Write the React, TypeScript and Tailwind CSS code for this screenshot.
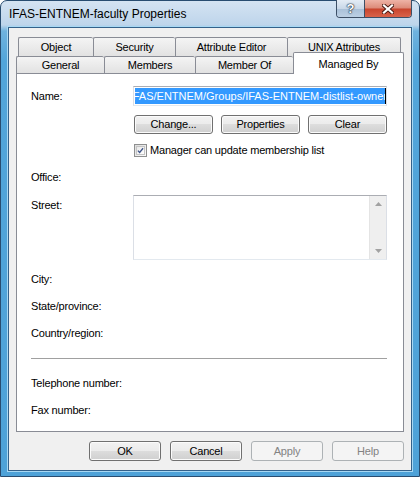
import React from "react";

const tabBase =
  "flex items-center justify-center border-t border-l border-[#898c95] rounded-t-[2px] bg-linear-to-b from-[#f4f4f4] to-[#e2e2e2] text-[11px] tracking-[-0.2px] text-black";

const pushBtn =
  "flex items-center justify-center rounded-[3px] border border-[#707070] bg-[linear-gradient(to_bottom,#f2f2f2_0%,#ebebeb_50%,#dddddd_50%,#cfcfcf_100%)] shadow-[inset_0_0_0_1px_#fbfbfb] text-[11px] tracking-[-0.2px] text-black";

const label = "h-[13px] leading-[13px] text-[11px] tracking-[-0.2px] text-black whitespace-nowrap";

function CloseGlyph() {
  return (
    <svg width="12" height="10" viewBox="0 0 12 10">
      <path d="M2 1.5 L10 8.5 M10 1.5 L2 8.5" stroke="#4a1a12" strokeWidth="4" strokeLinecap="square" />
      <path d="M2 1.5 L10 8.5 M10 1.5 L2 8.5" stroke="#ffffff" strokeWidth="2.2" strokeLinecap="square" />
    </svg>
  );
}

function CheckMark() {
  return (
    <svg width="9" height="9" viewBox="0 0 9 9">
      <path d="M1.2 4.6 L3.4 7 L7.8 1.6" fill="none" stroke="#3e5488" strokeWidth="1.7" />
    </svg>
  );
}

function Arrow({ up }: { up?: boolean }) {
  return (
    <svg width="7" height="4" viewBox="0 0 7 4">
      {up ? <path d="M0 4 L3.5 0 L7 4 Z" fill="#a2a2a2" /> : <path d="M0 0 L3.5 4 L7 0 Z" fill="#a2a2a2" />}
    </svg>
  );
}

export default function App() {
  return (
    <div className="w-[420px] h-[477px] overflow-hidden bg-white font-['Liberation_Sans',Arial,sans-serif]">
      <div className="w-[420px] h-[477px] flex flex-col border border-[#284c70] rounded-t-[7px] bg-[linear-gradient(to_bottom,#d4e3f2_0px,#bed5eb_24px,#6fb2de_30px,#52a5da_60px,#4ea2d8_100%)] px-[7px] pb-[5px]">
        {/* caption */}
        <div className="h-[26px] flex items-start justify-between">
          <span className="mt-[6px] ml-px text-[12px] leading-[14px] text-black whitespace-nowrap">
            IFAS-ENTNEM-faculty Properties
          </span>
          <div className="-mt-px flex h-[18px] rounded-b-[4px] border border-t-0 border-[#3c4f66] overflow-hidden">
            <div className="w-[28px] h-full flex items-center justify-center bg-[linear-gradient(to_bottom,#e4ecf5_0%,#c9d8e8_50%,#a9c0d8_52%,#bcd0e4_100%)] border-r border-[#3c4f66]">
              <span className="text-[13px] leading-[13px] font-bold text-white [text-shadow:0_0_1px_#1d2c3c,0_0_1px_#1d2c3c,0_0_2px_#1d2c3c]">
                ?
              </span>
            </div>
            <div className="w-[46px] h-full flex items-center justify-center bg-[linear-gradient(to_bottom,#eeb3a6_0%,#dc8a78_48%,#c8442d_52%,#d9634a_100%)]">
              <CloseGlyph />
            </div>
          </div>
        </div>

        {/* client area */}
        <div className="flex-1 flex flex-col border border-[#34618a] shadow-[0_0_0_1px_#a8d8f3] bg-[#f0f0f0] pt-[9px] px-[7px] pb-[9px]">
          {/* tab headers */}
          <div className="h-[36px] flex flex-col">
            <div className="h-[19px] flex pl-[2px]">
              <div className={`${tabBase} w-[75px]`}>Object</div>
              <div className={`${tabBase} w-[82px]`}>Security</div>
              <div className={`${tabBase} w-[112px]`}>Attribute Editor</div>
              <div className={`${tabBase} w-[114px] border-r`}>UNIX Attributes</div>
            </div>
            <div className="h-[17px] flex items-end">
              <div className={`${tabBase} h-[17px] w-[88px] rounded-none`}>General</div>
              <div className={`${tabBase} h-[17px] w-[91px] rounded-none`}>Members</div>
              <div className={`${tabBase} h-[17px] w-[98px] rounded-none`}>Member Of</div>
              <div className="relative z-10 -mb-px h-[22px] w-[111px] flex justify-center pt-[3px] border-t border-l border-r border-[#898c95] rounded-t-[2px] bg-white text-[11px] tracking-[-0.2px] text-black">
                Managed By
              </div>
            </div>
          </div>

          {/* tab page */}
          <div className="h-[359px] border border-[#898c95] bg-white flex flex-col pt-[12px] pl-[14px] pr-[16px]">
            <div className="h-[20px] grid grid-cols-[102px_254px] items-center">
              <span className={label}>Name:</span>
              <div className="h-[20px] border border-[#abadb3] border-l-[#dbdfe6] border-r-[#dbdfe6] border-b-[#e3e9ef] bg-white py-px pl-px overflow-hidden">
                <div className="h-[16px] bg-[#3399ff] flex justify-end overflow-hidden border-r border-black">
                  <span className="text-[11px] leading-[16px] text-white whitespace-nowrap -mr-[2px]">
                    FAS/ENTNEM/Groups/IFAS-ENTNEM-distlist-owner
                  </span>
                </div>
              </div>
            </div>

            <div className="mt-[9px] h-[19px] flex gap-[8px] ml-[103px]">
              <div className={`${pushBtn} w-[79px]`}>Change...</div>
              <div className={`${pushBtn} w-[79px]`}>Properties</div>
              <div className={`${pushBtn} w-[79px]`}>Clear</div>
            </div>

            <div className="mt-[10px] h-[13px] flex items-center gap-[3px] ml-[103px]">
              <div className="w-[13px] h-[13px] border border-[#8e8f8f] bg-linear-to-br from-[#dcdcdc] to-[#fbfbfb] p-px">
                <div className="w-full h-full border border-[#c4c4c4] bg-linear-to-br from-[#e8e8e8] to-white flex items-center justify-center">
                  <CheckMark />
                </div>
              </div>
              <span className={label}>Manager can update membership list</span>
            </div>

            <div className="mt-[14px]">
              <div className={label}>Office:</div>
            </div>

            <div className="mt-[11px] grid grid-cols-[102px_254px]">
              <div className="pt-[4px]">
                <div className={label}>Street:</div>
              </div>
              <div className="h-[65px] border border-[#abadb3] border-l-[#dbdfe6] border-r-[#dbdfe6] border-b-[#e3e9ef] bg-white flex justify-end">
                <div className="w-[17px] h-full bg-[#efefef] border-l border-[#e4e4e4] flex flex-col items-center justify-between py-[6px]">
                  <Arrow up />
                  <Arrow />
                </div>
              </div>
            </div>

            <div className="mt-[13px]">
              <div className={label}>City:</div>
            </div>
            <div className="mt-[14px]">
              <div className={label}>State/province:</div>
            </div>
            <div className="mt-[14px]">
              <div className={label}>Country/region:</div>
            </div>

            <div className="mt-[18px] h-px bg-[#a0a0a0]" />

            <div className="mt-[18px]">
              <div className={label}>Telephone number:</div>
            </div>
            <div className="mt-[14px]">
              <div className={label}>Fax number:</div>
            </div>
          </div>

          {/* dialog buttons */}
          <div className="mt-[9px] h-[20px] flex justify-end gap-[9px]">
            <div className={`${pushBtn} w-[72px] h-[20px] border-[#3c7fb1] shadow-[inset_0_0_0_1px_#a9def5]`}>OK</div>
            <div className={`${pushBtn} w-[72px] h-[20px]`}>Cancel</div>
            <div className="w-[72px] h-[20px] flex items-center justify-center rounded-[3px] border border-[#adb2b5] bg-[#f4f4f4] text-[11px] tracking-[-0.2px] text-[#838383]">
              Apply
            </div>
            <div className="w-[72px] h-[20px] flex items-center justify-center rounded-[3px] border border-[#adb2b5] bg-[#f4f4f4] text-[11px] tracking-[-0.2px] text-[#838383]">
              Help
            </div>
          </div>
        </div>
      </div>
    </div>
  );
}
